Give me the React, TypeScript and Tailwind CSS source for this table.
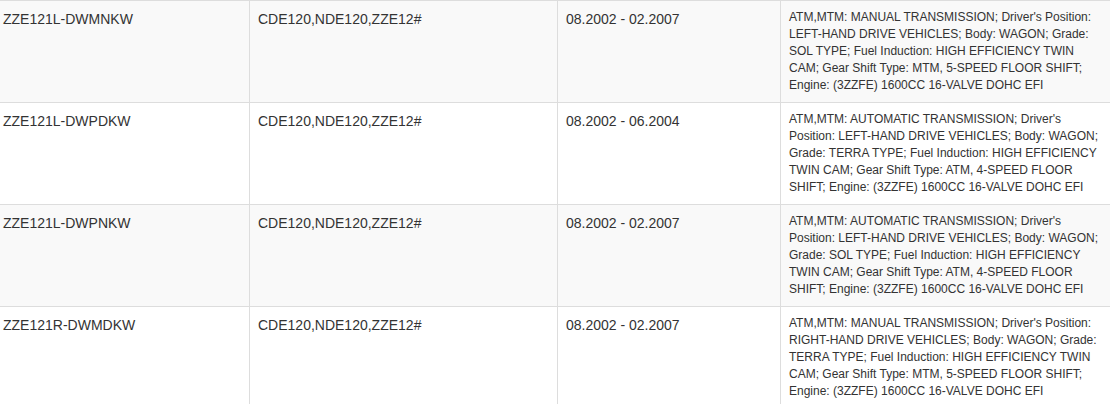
import React from 'react';

const rows = [
  {
    code: 'ZZE121L-DWMNKW',
    models: 'CDE120,NDE120,ZZE12#',
    period: '08.2002 - 02.2007',
    desc: "ATM,MTM: MANUAL TRANSMISSION; Driver's Position: LEFT-HAND DRIVE VEHICLES; Body: WAGON; Grade: SOL TYPE; Fuel Induction: HIGH EFFICIENCY TWIN CAM; Gear Shift Type: MTM, 5-SPEED FLOOR SHIFT; Engine: (3ZZFE) 1600CC 16-VALVE DOHC EFI",
  },
  {
    code: 'ZZE121L-DWPDKW',
    models: 'CDE120,NDE120,ZZE12#',
    period: '08.2002 - 06.2004',
    desc: "ATM,MTM: AUTOMATIC TRANSMISSION; Driver's Position: LEFT-HAND DRIVE VEHICLES; Body: WAGON; Grade: TERRA TYPE; Fuel Induction: HIGH EFFICIENCY TWIN CAM; Gear Shift Type: ATM, 4-SPEED FLOOR SHIFT; Engine: (3ZZFE) 1600CC 16-VALVE DOHC EFI",
  },
  {
    code: 'ZZE121L-DWPNKW',
    models: 'CDE120,NDE120,ZZE12#',
    period: '08.2002 - 02.2007',
    desc: "ATM,MTM: AUTOMATIC TRANSMISSION; Driver's Position: LEFT-HAND DRIVE VEHICLES; Body: WAGON; Grade: SOL TYPE; Fuel Induction: HIGH EFFICIENCY TWIN CAM; Gear Shift Type: ATM, 4-SPEED FLOOR SHIFT; Engine: (3ZZFE) 1600CC 16-VALVE DOHC EFI",
  },
  {
    code: 'ZZE121R-DWMDKW',
    models: 'CDE120,NDE120,ZZE12#',
    period: '08.2002 - 02.2007',
    desc: "ATM,MTM: MANUAL TRANSMISSION; Driver's Position: RIGHT-HAND DRIVE VEHICLES; Body: WAGON; Grade: TERRA TYPE; Fuel Induction: HIGH EFFICIENCY TWIN CAM; Gear Shift Type: MTM, 5-SPEED FLOOR SHIFT; Engine: (3ZZFE) 1600CC 16-VALVE DOHC EFI",
  },
];

export default function App() {
  return (
    <div className="w-[1110px] h-[404px] overflow-hidden bg-white text-[#333] font-['Liberation_Sans',Arial,sans-serif]">
      {rows.map((r, i) => (
        <div
          key={i}
          className={`grid grid-cols-[249px_308px_223px_1fr] border-t border-[#ddd] ${i % 2 === 0 ? 'bg-[#f9f9f9]' : 'bg-white'}`}
        >
          <div className="pl-[3px] pr-2 py-2 text-[14px] leading-5">{r.code}</div>
          <div className="border-l border-[#ddd] px-2 py-2 text-[14px] leading-5">{r.models}</div>
          <div className="border-l border-[#ddd] px-2 py-2 text-[14px] leading-5">{r.period}</div>
          <div className="border-l border-[#ddd] px-2 py-2 text-[12px] leading-[17px]">{r.desc}</div>
        </div>
      ))}
    </div>
  );
}
